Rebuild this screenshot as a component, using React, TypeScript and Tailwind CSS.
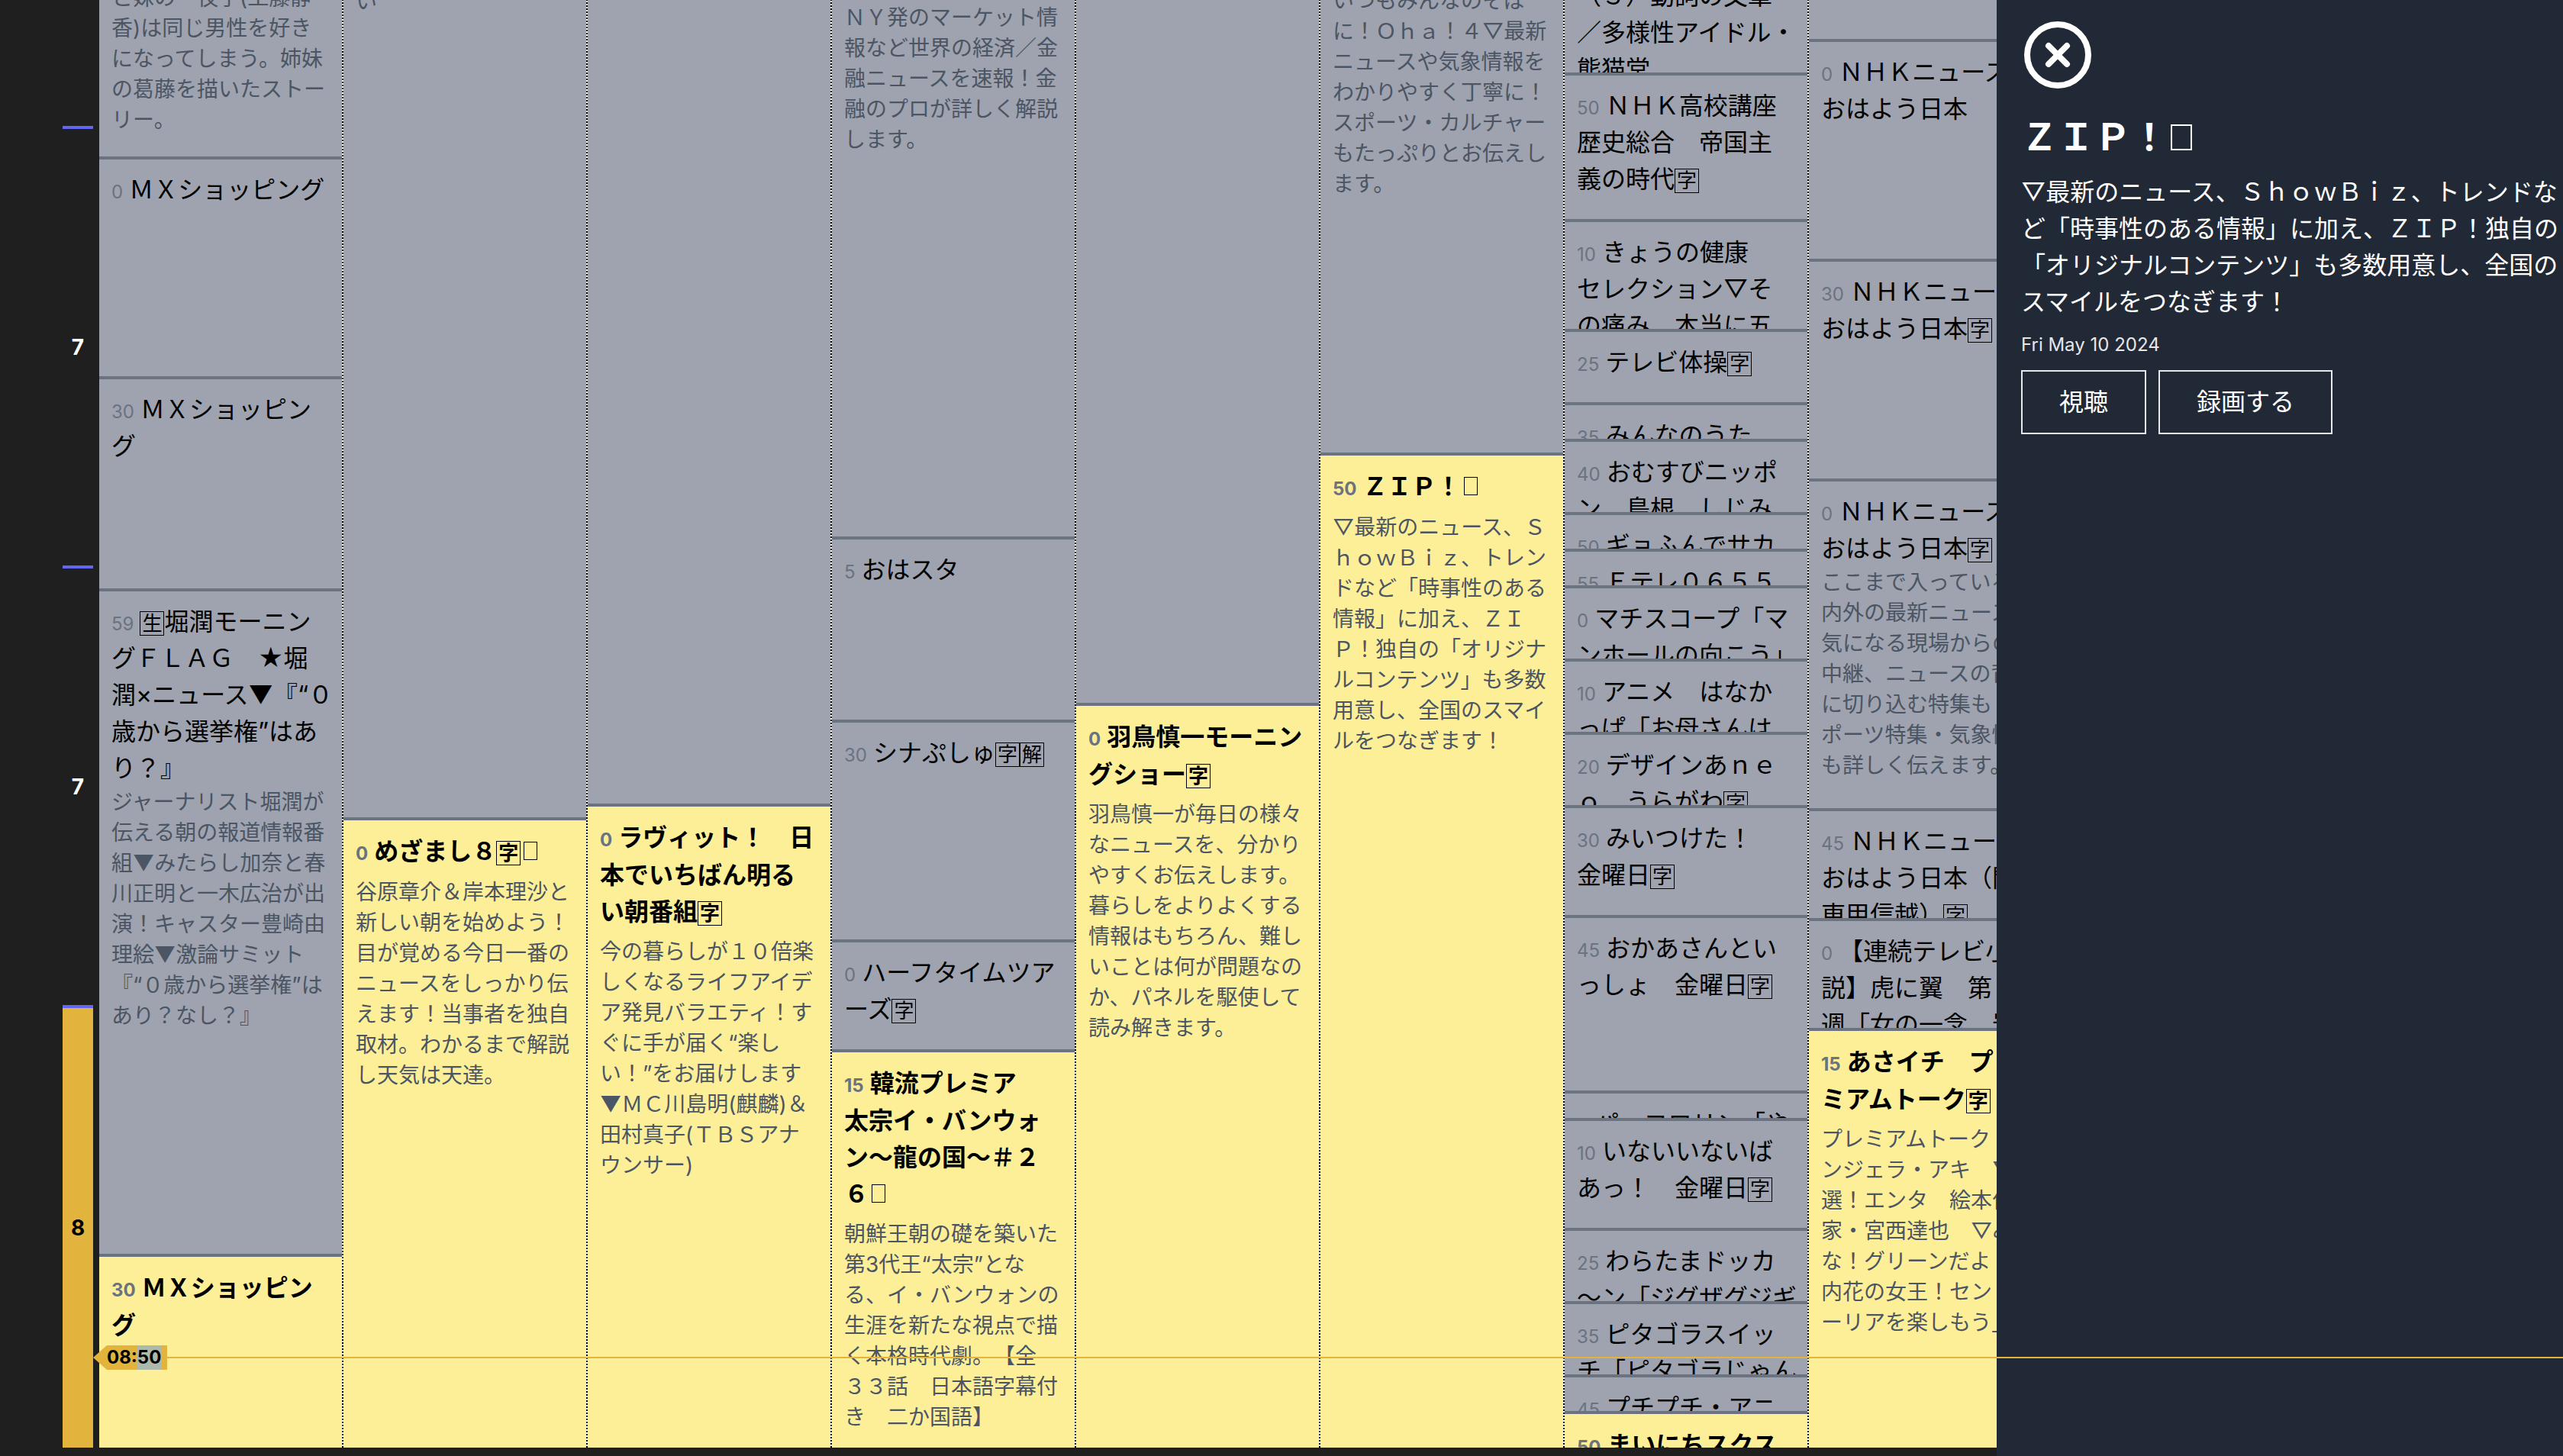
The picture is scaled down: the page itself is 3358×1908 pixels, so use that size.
import { CircleX } from "lucide-react";

type Program = {
  top: number;
  minute?: string;
  title?: string;
  body?: string;
  live?: boolean;
};

const SCROLLED = 100;

// In titles, [x] is a boxed broadcast mark and □ a mark without a glyph.
const channels: Program[][] = [
  [
    { top: -43, body: "と妹の一夜子(工藤静\n香)は同じ男性を好き\nになってしまう。姉妹\nの葛藤を描いたストー\nリー。" },
    { top: 205, minute: "0", title: "ＭＸショッピング" },
    { top: 493, minute: "30", title: "ＭＸショッピン\nグ" },
    {
      top: 771,
      minute: "59",
      title: "[生]堀潤モーニン\nグＦＬＡＧ　★堀\n潤×ニュース▼『“０\n歳から選挙権”はあ\nり？』",
      body: "ジャーナリスト堀潤が\n伝える朝の報道情報番\n組▼みたらし加奈と春\n川正明と一木広治が出\n演！キャスター豊崎由\n理絵▼激論サミット\n『“０歳から選挙権”は\nあり？なし？』",
    },
    { top: 1643, minute: "30", title: "ＭＸショッピン\nグ", live: true },
  ],
  [
    { top: -38, body: "い" },
    {
      top: 1071,
      minute: "0",
      title: "めざまし８[字]□",
      body: "谷原章介＆岸本理沙と\n新しい朝を始めよう！\n目が覚める今日一番の\nニュースをしっかり伝\nえます！当事者を独自\n取材。わかるまで解説\nし天気は天達。",
      live: true,
    },
  ],
  [
    { top: -60 },
    {
      top: 1053,
      minute: "0",
      title: "ラヴィット！　日\n本でいちばん明る\nい朝番組[字]",
      body: "今の暮らしが１０倍楽\nしくなるライフアイデ\nア発見バラエティ！す\nぐに手が届く“楽し\nい！”をお届けします\n▼ＭＣ川島明(麒麟)＆\n田村真子(ＴＢＳアナ\nウンサー)",
      live: true,
    },
  ],
  [
    { top: -17, body: "ＮＹ発のマーケット情\n報など世界の経済／金\n融ニュースを速報！金\n融のプロが詳しく解説\nします。" },
    { top: 703, minute: "5", title: "おはスタ" },
    { top: 943, minute: "30", title: "シナぷしゅ[字][解]" },
    { top: 1231, minute: "0", title: "ハーフタイムツア\nーズ[字]" },
    {
      top: 1375,
      minute: "15",
      title: "韓流プレミア\n太宗イ・バンウォ\nン～龍の国～＃２\n６□",
      body: "朝鮮王朝の礎を築いた\n第3代王“太宗”とな\nる、イ・バンウォンの\n生涯を新たな視点で描\nく本格時代劇。　【全\n３３話　日本語字幕付\nき　二か国語】",
      live: true,
    },
  ],
  [
    { top: -60 },
    {
      top: 921,
      minute: "0",
      title: "羽鳥慎一モーニン\nグショー[字]",
      body: "羽鳥慎一が毎日の様々\nなニュースを、分かり\nやすくお伝えします。\n暮らしをよりよくする\n情報はもちろん、難し\nいことは何が問題なの\nか、パネルを駆使して\n読み解きます。",
      live: true,
    },
  ],
  [
    { top: -39, body: "いつもみんなのそば\nに！Ｏｈａ！４▽最新\nニュースや気象情報を\nわかりやすく丁寧に！\nスポーツ・カルチャー\nもたっぷりとお伝えし\nます。" },
    {
      top: 593,
      minute: "50",
      title: "ＺＩＰ！□",
      body: "▽最新のニュース、Ｓ\nｈｏｗＢｉｚ、トレン\nドなど「時事性のある\n情報」に加え、ＺＩ\nＰ！独自の「オリジナ\nルコンテンツ」も多数\n用意し、全国のスマイ\nルをつなぎます！",
      live: true,
    },
  ],
  [
    { top: -49, title: "（３）動詞の文章\n／多様性アイドル・\n熊猫堂" },
    { top: 95, minute: "50", title: "ＮＨＫ高校講座\n歴史総合　帝国主\n義の時代[字]" },
    { top: 287, minute: "10", title: "きょうの健康\nセレクション▽そ\nの痛み　本当に五" },
    { top: 431, minute: "25", title: "テレビ体操[字]" },
    { top: 527, minute: "35", title: "みんなのうた" },
    { top: 575, minute: "40", title: "おむすびニッポ\nン　島根　しじみ" },
    { top: 671, minute: "50", title: "ギョふんでサカ" },
    { top: 719, minute: "55", title: "Ｅテレ０６５５" },
    { top: 767, minute: "0", title: "マチスコープ「マ\nンホールの向こう」" },
    { top: 863, minute: "10", title: "アニメ　はなか\nっぱ「お母さんは" },
    { top: 959, minute: "20", title: "デザインあｎｅ\nｏ　うらがわ[字]" },
    { top: 1055, minute: "30", title: "みいつけた！\n金曜日[字]" },
    { top: 1199, minute: "45", title: "おかあさんとい\nっしょ　金曜日[字]" },
    { top: 1429, minute: "9", title: "パッコロリン「や" },
    { top: 1465, minute: "10", title: "いないいないば\nあっ！　金曜日[字]" },
    { top: 1609, minute: "25", title: "わらたまドッカ\n～ン「ジグザグジギ" },
    { top: 1705, minute: "35", title: "ピタゴラスイッ\nチ「ピタゴラじゃん" },
    { top: 1801, minute: "45", title: "プチプチ・アニ" },
    { top: 1849, minute: "50", title: "まいにちスクス", live: true },
  ],
  [
    { top: -60 },
    { top: 51, minute: "0", title: "ＮＨＫニュース\nおはよう日本" },
    { top: 339, minute: "30", title: "ＮＨＫニュース\nおはよう日本[字]" },
    {
      top: 627,
      minute: "0",
      title: "ＮＨＫニュース\nおはよう日本[字]",
      body: "ここまで入っている国\n内外の最新ニュースを\n気になる現場からの生\n中継、ニュースの背景\nに切り込む特集も　ス\nポーツ特集・気象情報\nも詳しく伝えます。",
    },
    { top: 1059, minute: "45", title: "ＮＨＫニュース\nおはよう日本（関\n東甲信越）[字]" },
    { top: 1203, minute: "0", title: "【連続テレビ小\n説】虎に翼　第６\n週「女の一念　岩" },
    {
      top: 1347,
      minute: "15",
      title: "あさイチ　プレ\nミアムトーク[字]",
      body: "プレミアムトーク　ア\nンジェラ・アキ　▽特\n選！エンタ　絵本作\n家・宮西達也　▽みん\nな！グリーンだよ　宮\n内花の女王！セントポ\nーリアを楽しもう」",
      live: true,
    },
  ],
];

function TitleText({ text }: { text: string }) {
  return text.split(/(\[.\]|□)/).map((part, i) => {
    if (part === "□") {
      return <span key={i} className="mx-1 inline-block h-6 w-[18px] border border-current" />;
    }
    if (part.startsWith("[")) {
      return (
        <span
          key={i}
          className="inline-flex size-8 items-center justify-center border border-current text-[26px] leading-none"
        >
          {part[1]}
        </span>
      );
    }
    return part;
  });
}

function ProgramCell({ program, height }: { program: Program; height?: number }) {
  const { minute, title, body, live } = program;
  return (
    <article
      style={height === undefined ? undefined : { height }}
      className={
        "overflow-hidden whitespace-pre border-t-4 border-[#6b7280] px-4 pt-4 " +
        (height === undefined ? "min-h-0 flex-1 " : "shrink-0 ") +
        (live ? "bg-[#fdef97]" : "bg-[#9ea3af]")
      }
    >
      {title && (
        <h3
          className={
            "text-[32px] leading-[48px] text-black " +
            (live ? "mb-2 font-bold first-line:leading-[50px]" : "")
          }
        >
          {minute && <span className="mr-2 text-2xl leading-none text-[#6b7280]">{minute}</span>}
          <TitleText text={title} />
        </h3>
      )}
      {body && <p className="text-[28px] leading-[40px] text-[#4b5563]">{body}</p>}
    </article>
  );
}

function ChannelColumn({ programs }: { programs: Program[] }) {
  return (
    <section className="flex w-[320px] shrink-0 flex-col overflow-hidden border-r-2 border-dotted border-black bg-white">
      <div className="shrink-0 bg-[#9ea3af]" style={{ height: programs[0].top + SCROLLED }} />
      {programs.map((program, i) => (
        <ProgramCell
          key={program.top}
          program={program}
          height={i + 1 < programs.length ? programs[i + 1].top - program.top : undefined}
        />
      ))}
    </section>
  );
}

function HourRail() {
  const hour = "flex w-full items-center justify-center border-t-4 border-[#6366f1] text-[28px] font-bold";
  return (
    <div className="mr-2 flex w-10 shrink-0 flex-col text-white">
      <div className="h-[265px] shrink-0" />
      <div className={hour + " h-[576px] shrink-0"}>7</div>
      <div className={hour + " h-[576px] shrink-0"}>7</div>
      <div className={hour + " min-h-0 flex-1 bg-[#e2b43e] text-black"}>8</div>
    </div>
  );
}

function NowMarker() {
  return (
    <div className="absolute left-[122px] right-0 top-[1763px] flex items-center">
      <svg width="18" height="32" viewBox="0 0 18 32" className="shrink-0" aria-hidden="true">
        <path d="M0 16 18 0v32z" fill="#e2b43e" />
      </svg>
      <time className="flex h-8 items-center bg-[#e2b43e] pr-2 text-2xl font-bold text-black">
        08:<span className="bg-[#adb9aa]">50</span>
      </time>
      <div className="h-0.5 flex-1 bg-[#e2b43e]" />
    </div>
  );
}

function DetailPanel() {
  const action = "border-2 border-[#e5e7eb] px-12 py-4 text-[32px] leading-[48px]";
  return (
    <aside className="w-[742px] shrink-0 bg-[#212936] pl-8 pt-6 text-white">
      <button type="button" aria-label="閉じる" className="block">
        <CircleX size={96} strokeWidth={2} />
      </button>
      <h2 className="mt-7 text-5xl leading-[64px] font-bold">
        ＺＩＰ！
        <span className="ml-1 inline-block h-[34px] w-7 border-2 border-current" />
      </h2>
      <p className="mt-4 whitespace-pre text-[32px] leading-[48px]">
        {"▽最新のニュース、ＳｈｏｗＢｉｚ、トレンドな\nど「時事性のある情報」に加え、ＺＩＰ！独自の\n「オリジナルコンテンツ」も多数用意し、全国の\nスマイルをつなぎます！"}
      </p>
      <p className="mt-4 text-2xl text-[#e5e7eb]">Fri May 10 2024</p>
      <div className="mt-[17px] flex gap-4">
        <button type="button" className={action}>視聴</button>
        <button type="button" className={action}>録画する</button>
      </div>
    </aside>
  );
}

export default function App() {
  return (
    <div
      lang="ja"
      className="relative flex h-screen overflow-hidden bg-[#1f1f1f] font-['Inter','Noto_Sans_CJK_JP',sans-serif]"
    >
      <main className="flex min-w-0 flex-1 flex-col overflow-hidden pb-[11px]">
        <div className="-mt-[100px] flex min-h-0 flex-1 pl-[82px]">
          <HourRail />
          {channels.map((programs, i) => (
            <ChannelColumn key={i} programs={programs} />
          ))}
        </div>
      </main>
      <DetailPanel />
      <NowMarker />
    </div>
  );
}
